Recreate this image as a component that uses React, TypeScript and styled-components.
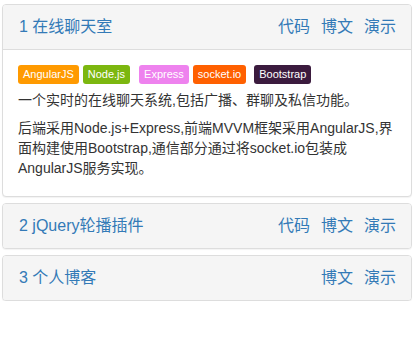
import React from 'react';
import styled, { createGlobalStyle } from 'styled-components';

const GlobalStyle = createGlobalStyle`
  html, body {
    margin: 0;
    padding: 0;
    background: #fff;
  }
  body {
    font-family: "Liberation Sans", "Noto Sans CJK SC", sans-serif;
    font-size: 14px;
    line-height: 1.42857;
    color: #333;
  }
`;

interface Tag {
  name: string;
  color: string;
  space?: number;
}

interface Project {
  id: number;
  title: string;
  links: string[];
  tags?: Tag[];
  paragraphs?: string[];
}

const projects: Project[] = [
  {
    id: 1,
    title: '在线聊天室',
    links: ['代码', '博文', '演示'],
    tags: [
      { name: 'AngularJS', color: '#ff9a00' },
      { name: 'Node.js', color: '#7cb70f' },
      { name: 'Express', color: '#ee82ee', space: 5 },
      { name: 'socket.io', color: '#ff6000' },
      { name: 'Bootstrap', color: '#3b1b3e', space: 4 },
    ],
    paragraphs: [
      '一个实时的在线聊天系统,包括广播、群聊及私信功能。',
      '后端采用Node.js+Express,前端MVVM框架采用AngularJS,界面构建使用Bootstrap,通信部分通过将socket.io包装成AngularJS服务实现。',
    ],
  },
  { id: 2, title: 'jQuery轮播插件', links: ['代码', '博文', '演示'] },
  { id: 3, title: '个人博客', links: ['博文', '演示'] },
];

const List = styled.div`
  display: flex;
  flex-direction: column;
  gap: 6px;
  padding: 4px 6px 0 2px;
`;

const Panel = styled.div`
  border: 1px solid #ddd;
  border-radius: 4px;
  background: #fff;
  box-shadow: 0 1px 1px rgba(0, 0, 0, 0.05);
  overflow: hidden;
`;

const Heading = styled.div<{ $open: boolean }>`
  display: flex;
  align-items: center;
  justify-content: space-between;
  height: 44px;
  padding: 0 15px 0 16px;
  background: #f5f5f5;
  border-bottom: ${p => (p.$open ? '1px solid #ddd' : 'none')};
  font-size: 16px;
  color: #337ab7;
`;

const Title = styled.span`
  color: #337ab7;
`;

const Links = styled.div`
  display: flex;
  gap: 11px;
`;

const Link = styled.a`
  color: #337ab7;
  text-decoration: none;
  cursor: pointer;
`;

const Body = styled.div`
  padding: 15px 15px 9px;
`;

const Tags = styled.div`
  display: flex;
  gap: 4px;
  margin-bottom: 7px;
`;

const Label = styled.span<{ $bg: string; $space?: number }>`
  display: inline-block;
  margin-left: ${p => p.$space || 0}px;
  padding: 3px 5px;
  font-size: 11px;
  line-height: 13px;
  color: #fff;
  background: ${p => p.$bg};
  border-radius: 3px;
  white-space: nowrap;
`;

const Para = styled.p`
  margin: 0 0 8px;
`;

export default function App() {
  return (
    <>
      <GlobalStyle />
      <List>
        {projects.map(p => (
          <Panel key={p.id}>
            <Heading $open={!!p.tags}>
              <Title>{p.id} {p.title}</Title>
              <Links>
                {p.links.map(l => (
                  <Link key={l}>{l}</Link>
                ))}
              </Links>
            </Heading>
            {p.tags && (
              <Body>
                <Tags>
                  {p.tags.map(t => (
                    <Label key={t.name} $bg={t.color} $space={t.space}>{t.name}</Label>
                  ))}
                </Tags>
                {p.paragraphs?.map((txt, i) => (
                  <Para key={i}>{txt}</Para>
                ))}
              </Body>
            )}
          </Panel>
        ))}
      </List>
    </>
  );
}
